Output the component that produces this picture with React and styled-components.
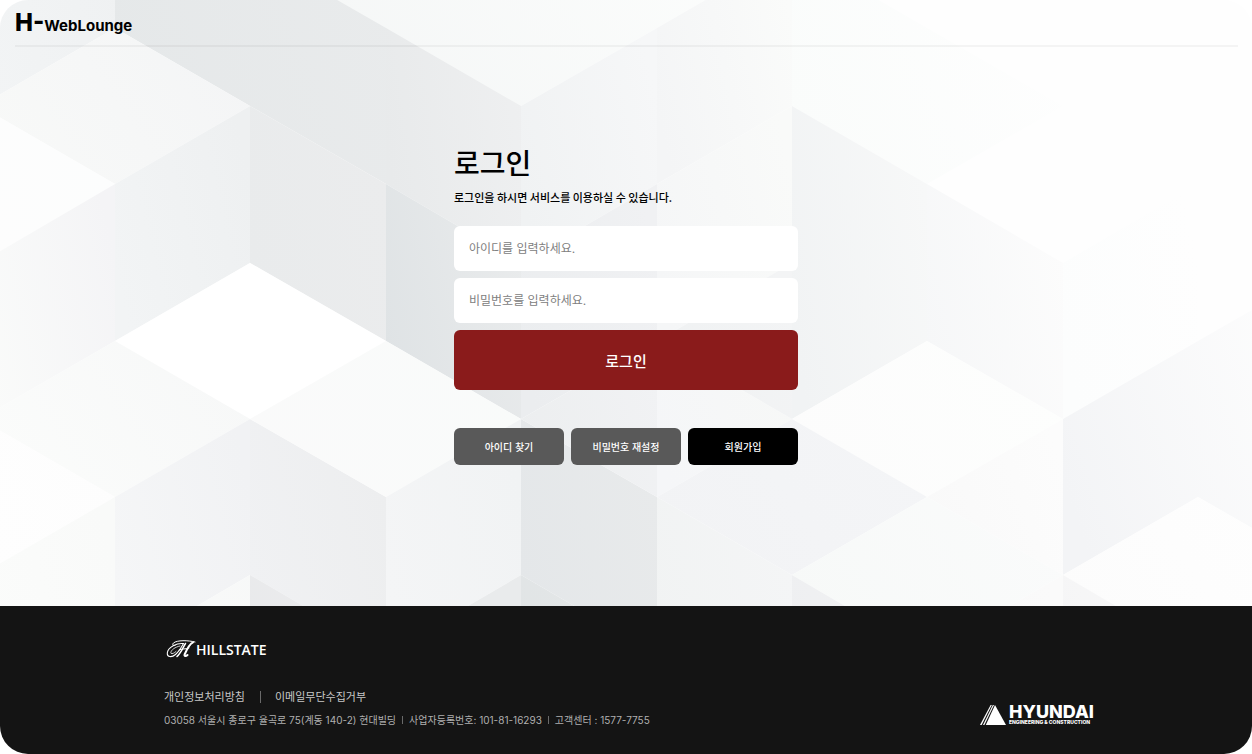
import {useState} from 'react';
import styled, {createGlobalStyle} from 'styled-components';

// corner points of the cube pattern: columns every ~135px, rows every ~78px
const COLS = [-20, 115, 250, 386, 521, 657, 792, 927, 1063, 1198, 1334];
const ROWS = [-128, -50, 28, 106, 184, 263, 341, 419, 497, 575, 654, 732];

// [corners as "col,row", colour at bottom left, colour at top right]
const FACES = [
    ['0,0 1,0 1,2 0,3', '#f2f4f5', '#eff1f2'],
    ['1,0 3,0 3,4 2,3 1,2', '#e5e8e9', '#e9ebec'],
    ['3,0 4,0 4,5 3,4', '#e8eaeb', '#eff0f1'],
    ['2,0 4,0 5,0 6,1 5,2 4,3 3,2 2,1', '#f4f6f6', '#fdfefd'],
    ['1,2 2,3 1,4 0,3', '#f8f9f8', '#f4f5f6'],
    ['0,3 1,4 0,5', '#fdfdfd', '#fcfdfd'],
    ['0,5 1,4 1,6 0,7', '#fafbfa', '#f4f4f6'],
    ['1,4 2,3 2,5 1,6', '#f2f4f5', '#eef0f1'],
    ['2,3 3,4 3,6 2,5', '#e9ebec', '#ebeced'],
    ['3,4 4,5 4,7 3,6', '#dfe3e5', '#e9ebec'],
    ['2,5 3,6 2,7 1,6', '#ffffff', '#ffffff'],
    ['1,6 2,7 1,8 0,7', '#fbfcfb', '#f7f8f8'],
    ['0,7 1,8 0,9', '#fefefe', '#fdfdfd'],
    ['0,9 1,8 1,10 0,11', '#fbfcfb', '#f9faf9'],
    ['1,8 2,7 2,9 1,10', '#f5f6f7', '#f1f2f4'],
    ['2,9 3,10 2,11 1,10', '#fafbfa', '#f6f7f7'],
    ['2,7 3,8 3,10 2,9', '#f0f1f3', '#edeeef'],
    ['2,9 3,10 3,11 2,11', '#e8e9eb', '#ededee'],
    ['3,6 4,7 3,8 2,7', '#fafafa', '#f9fbfa'],
    ['3,8 4,7 4,9 3,10', '#f4f5f6', '#f1f3f4'],
    ['3,10 4,9 4,11 3,11', '#e9ebec', '#e9ebec'],
    ['4,7 5,8 5,10 4,9', '#e4e7e9', '#e8eaeb'],
    ['4,9 5,10 5,11 4,11', '#e0e4e5', '#e6e8e9'],
    ['4,3 5,2 5,4 4,5', '#f0f2f3', '#f6f7f8'],
    ['5,2 6,1 6,3 5,4', '#f4f5f6', '#fafbfa'],
    ['6,1 7,2 8,3 7,4 6,3', '#fafcfb', '#fefefe'],
    ['4,5 5,4 5,6 4,7', '#ebedef', '#f0f1f3'],
    ['5,4 6,3 6,5 5,6', '#f5f6f7', '#f9faf9'],
    ['4,7 5,6 5,8', '#eceeef', '#f1f2f4'],
    ['5,6 6,7 5,8', '#f5f6f8', '#f7f8f7'],
    ['5,6 6,5 6,7', '#eff1f2', '#f3f4f5'],
    ['6,3 7,4 7,6 6,7', '#f1f3f4', '#f7f8f8'],
    ['7,4 8,5 8,7 7,6', '#f6f7f8', '#fcfcfc'],
    ['7,6 8,7 7,8 6,7', '#fcfcfc', '#fdfefd'],
    ['5,8 6,7 7,8 6,9', '#f2f3f5', '#f4f5f7'],
    ['5,8 6,9 6,11 5,10', '#f1f3f3', '#f4f5f6'],
    ['7,8 8,7 8,9', '#f9f9f9', '#fcfcfc'],
    ['7,8 8,9 7,10 6,9', '#f7f9f8', '#fafbfb'],
    ['6,9 7,10 6,11', '#eeeff1', '#f1f2f3'],
    ['7,10 8,9 8,11', '#f8f8f8', '#fafafa'],
    ['8,5 9,4 9,6 8,7', '#fcfdfd', '#fefefe'],
    ['8,7 9,6 10,5 10,9 9,8 8,9', '#f3f4f6', '#fefefe'],
    ['9,8 10,9 9,10 8,9', '#fcfcfc', '#fefefe'],
    ['8,9 9,10 9,11 8,11', '#f5f5f6', '#f8f8f8'],
];

function toPoints(corners){
    return corners
        .split(' ')
        .map(corner => {
            const [col, row] = corner.split(',').map(Number);
            return `${COLS[col]},${ROWS[row]}`;
        })
        .join(' ');
}

function CubePattern(){
    return(
        <Pattern viewBox="0 0 1252 606" preserveAspectRatio="xMidYMin slice" aria-hidden="true">
            <defs>
                {FACES.map(([, from, to], i) => (
                    <linearGradient key={i} id={`face${i}`} x1="0" y1="0.7" x2="1" y2="0.3">
                        <stop offset="0" stopColor={from}/>
                        <stop offset="1" stopColor={to}/>
                    </linearGradient>
                ))}
            </defs>
            <rect width="1252" height="606" fill="#fefefe"/>
            {FACES.map(([corners], i) => (
                <polygon key={i} points={toPoints(corners)} fill={`url(#face${i})`}/>
            ))}
        </Pattern>
    );
}

function HillstateMark(){
    return(
        <svg width="30" height="20" viewBox="0 0 30 20" fill="none" stroke="#fff" strokeLinecap="round" aria-hidden="true">
            <path d="M29 3C22 1.200 11 1 7.500 4C6 5.500 7 7 9 6.500" strokeWidth="1"/>
            <path d="M17 4.500C11 4 2 8 1.300 14C1 18.500 6 18.500 9.500 15.500C13 12.500 15 9 17.500 4.500" strokeWidth="1.100"/>
            <path d="M14 7C9 8 5 11 4.800 13.800C5 15.500 8 14.500 10 12.500" strokeWidth="0.800"/>
            <path d="M19.500 4.500C17 8.500 15 14 11 17.500" strokeWidth="1.500"/>
            <path d="M27 3.400C23.500 5 21 10 18.600 15.500C18 17.500 20 17.500 21.500 16" strokeWidth="2"/>
            <path d="M13 11C16 9.500 19 10.500 23 9" strokeWidth="1"/>
        </svg>
    );
}

export default function App(){

    const [id, setId] = useState('');
    const [password, setPassword] = useState('');

    return(
        <>
            <GlobalStyle/>
            <Page>
                <Stage>
                    <CubePattern/>
                    <Content>
                        <Header>
                            <Logo href="#"><b>H-</b>WebLounge</Logo>
                        </Header>
                        <Login onSubmit={e => e.preventDefault()}>
                            <h1>로그인</h1>
                            <p>로그인을 하시면 서비스를 이용하실 수 있습니다.</p>
                            <Fields>
                                <Field
                                    type="text"
                                    aria-label="아이디"
                                    placeholder="아이디를 입력하세요."
                                    value={id}
                                    onChange={e => setId(e.target.value)}
                                />
                                <Field
                                    type="password"
                                    aria-label="비밀번호"
                                    placeholder="비밀번호를 입력하세요."
                                    value={password}
                                    onChange={e => setPassword(e.target.value)}
                                />
                                <Submit type="submit">로그인</Submit>
                            </Fields>
                            <Options>
                                <Option type="button">아이디 찾기</Option>
                                <Option type="button">비밀번호 재설정</Option>
                                <Option type="button" $dark>회원가입</Option>
                            </Options>
                        </Login>
                    </Content>
                </Stage>
                <Footer>
                    <Company>
                        <Hillstate>
                            <HillstateMark/>
                            HILLSTATE
                        </Hillstate>
                        <Policies>
                            <a href="#">개인정보처리방침</a>
                            <a href="#">이메일무단수집거부</a>
                        </Policies>
                        <Address>
                            <span>03058 서울시 종로구 율곡로 75(계동 140-2) 현대빌딩</span>
                            <span>사업자등록번호: 101-81-16293</span>
                            <span>고객센터 : 1577-7755</span>
                        </Address>
                    </Company>
                    <Hyundai>
                        <svg width="26" height="20" viewBox="0 0 26 20" fill="#fff" aria-hidden="true">
                            <path d="M15 0L26 20H5.800Z"/>
                            <path d="M12.800 0H14L4.400 20H3Z"/>
                            <path d="M10.600 0H11.800L1.600 20H0Z"/>
                        </svg>
                        <div>
                            <strong>HYUNDAI</strong>
                            <small>ENGINEERING &amp; CONSTRUCTION</small>
                        </div>
                    </Hyundai>
                </Footer>
            </Page>
        </>
    );
}

const GlobalStyle = createGlobalStyle`
    *{
        box-sizing: border-box;
    }
    body{
        margin: 0;
        background-color: #ffffff;
        font-family: Inter, "Noto Sans CJK KR", sans-serif;
        color: #000000;
    }
    h1, p{
        margin: 0;
    }
    a{
        color: inherit;
        text-decoration: none;
    }
    button, input{
        border: none;
        border-radius: 6px;
        font-family: inherit;
    }
    button{
        padding: 0;
        color: #ffffff;
        cursor: pointer;
    }
`;

const Page = styled.div`
    min-height: 100vh;
    border-radius: 28px;
    overflow: hidden;

    display: flex;
    flex-direction: column;
`;

const Stage = styled.div`
    flex: 1;
    display: grid;
    grid-template-columns: minmax(0, 1fr);
`;

const Pattern = styled.svg`
    grid-area: 1 / 1;
    width: 100%;
    height: 100%;
    contain: size;
`;

const Content = styled.div`
    grid-area: 1 / 1;
    z-index: 1;

    display: flex;
    flex-direction: column;
    align-items: center;
`;

const Header = styled.header`
    align-self: stretch;
    height: 47px;
    margin: 0 14px 0 15px;
    padding-top: 9px;
    border-bottom: 2px solid rgba(0, 0, 0, 0.04);
`;

const Logo = styled.a`
    font-size: 15px;
    line-height: 28px;
    font-weight: 700;

        b{
            font-size: 24px;
            font-weight: 800;
        }
`;

const Login = styled.form`
    width: 344px;
    max-width: 100%;
    padding: 96px 0 32px;

        h1{
            font-size: 28px;
            line-height: 42px;
            font-weight: 500;
        }
        p{
            margin-top: 4px;
            font-family: "Noto Sans CJK KR", sans-serif;
            font-size: 11px;
            line-height: 16px;
            font-weight: 500;
        }
`;

const Fields = styled.div`
    margin-top: 21px;

    display: flex;
    flex-direction: column;
    gap: 7px;
`;

const Field = styled.input`
    height: 45px;
    padding: 0 15px;
    background-color: #ffffff;
    font-size: 12px;

        &::placeholder{
            color: #808080;
        }
`;

const Submit = styled.button`
    height: 60px;
    background-color: #8a1b1b;
    font-size: 15px;
    font-weight: 500;
`;

const Options = styled.div`
    margin-top: 38px;

    display: grid;
    grid-template-columns: repeat(3, 1fr);
    gap: 7px;
`;

const Option = styled.button`
    height: 37px;
    background-color: ${props => props.$dark ? '#000000' : '#595959'};
    font-size: 10px;
    font-weight: 500;
`;

const Footer = styled.footer`
    min-height: 148px;
    padding: 33px 158px 26px 164px;
    background-color: #141414;
    color: #c8c8c8;

    display: flex;
    justify-content: space-between;
    align-items: flex-end;
`;

const Company = styled.div`
    display: flex;
    flex-direction: column;
`;

const Hillstate = styled.div`
    height: 20px;
    padding-left: 2px;
    margin-bottom: 30px;

    display: flex;
    align-items: center;

    font-family: "Open Sans", sans-serif;
    font-size: 14px;
    font-weight: 600;
    color: #ffffff;
`;

const Policies = styled.div`
    display: flex;

    font-size: 11px;
    line-height: 16px;

        a{
            display: flex;
            align-items: center;
        }
        a + a::before{
            content: "";
            height: 12px;
            margin: 0 14px 0 15px;
            border-left: 1px solid #6a6a6a;
        }
`;

const Address = styled.div`
    margin-top: 7px;

    display: flex;
    flex-wrap: wrap;

    font-size: 10px;
    line-height: 16px;
    color: #b0b0b0;

        span{
            display: flex;
            align-items: center;
        }
        span + span::before{
            content: "";
            height: 8px;
            margin: 0 6px;
            border-left: 1px solid #6a6a6a;
        }
`;

const Hyundai = styled.div`
    padding-bottom: 3px;

    display: flex;
    align-items: center;
    gap: 3px;

    color: #ffffff;

        strong, small{
            display: block;
        }
        strong{
            font-size: 18px;
            line-height: 15px;
            font-weight: 800;
        }
        small{
            font-size: 5px;
            line-height: 6px;
            font-weight: 800;
        }
`;
